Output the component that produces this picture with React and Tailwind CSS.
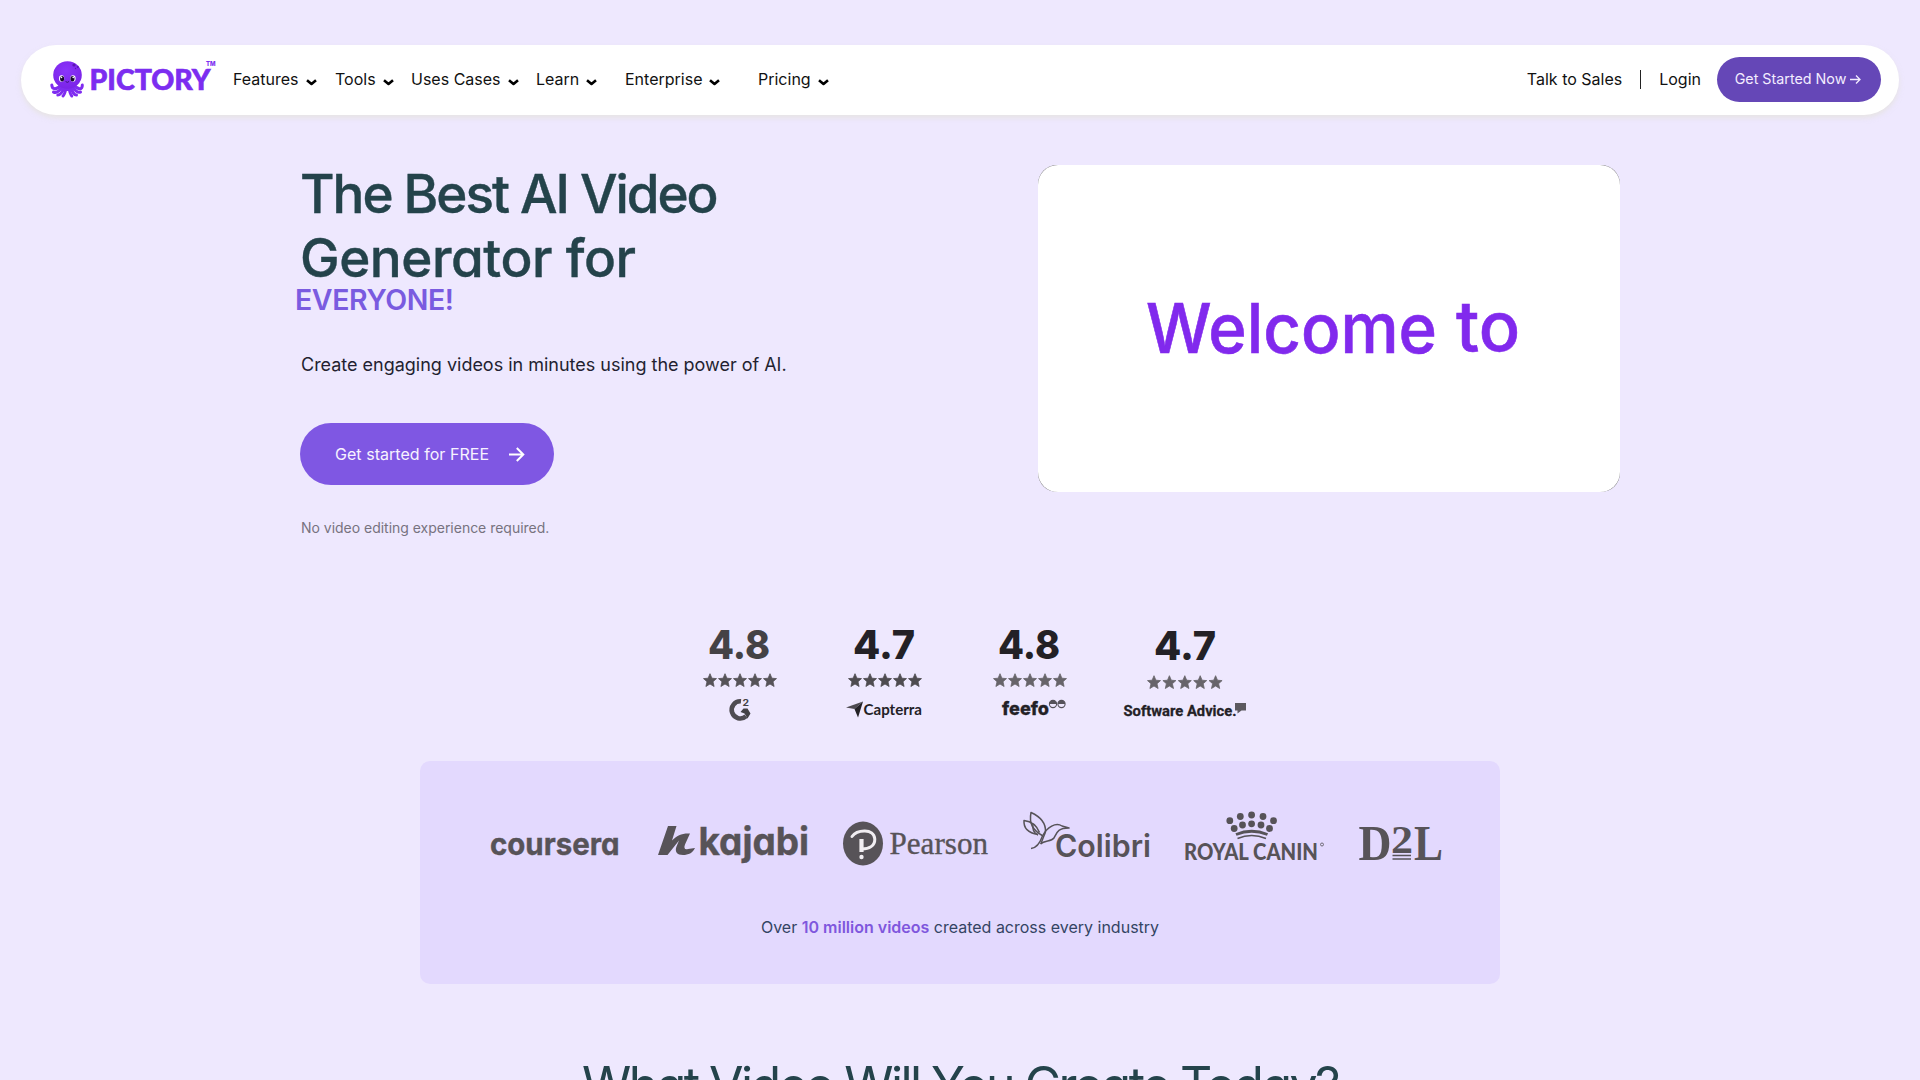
const INTER = "font-['Inter',sans-serif]";

const NAV = [
  { label: 'Features', width: 'w-[102px]' },
  { label: 'Tools', width: 'w-[76px]' },
  { label: 'Uses Cases', width: 'w-[125px]' },
  { label: 'Learn', width: 'w-[89px]' },
  { label: 'Enterprise', width: 'w-[133px]' },
  { label: 'Pricing', width: 'w-[80px]' },
];

/* Text inside a logo drawing, stretched to the logo's width. */
function Word({ x, y, size, width, weight = 700, family = 'Inter', children, ...rest }) {
  return (
    <text
      x={x}
      y={y}
      fontSize={size}
      fontWeight={weight}
      fontFamily={`${family}, sans-serif`}
      textLength={width}
      lengthAdjust="spacingAndGlyphs"
      {...rest}
    >
      {children}
    </text>
  );
}

function PictoryLogo() {
  return (
    <svg className="h-[46px] w-[170px] shrink-0" viewBox="48 56 170 46">
      <defs>
        <radialGradient id="head" cx="45%" cy="35%" r="70%">
          <stop offset="0" stopColor="#8a35fb" />
          <stop offset="1" stopColor="#7a22e6" />
        </radialGradient>
      </defs>
      <g fill="none" stroke="#7f2cf0" strokeWidth="3" strokeLinecap="round">
        <path d="M61 85 C57 90 52 90 51.800 85" />
        <path d="M74 85 C78 90 82.500 90 82.300 85" />
        <path d="M62 87 C59 92 56 93 53.500 92" />
        <path d="M73 87 C76 92 78 93 80.500 92" />
        <path d="M64 88 C62 93 60 95 57.800 95" />
        <path d="M71 88 C73 93 74 95 76.500 95" />
        <path d="M66 88 C65 93 64.500 95 63 96" />
        <path d="M69 88 C70 93 70.500 95 71.800 96" />
      </g>
      <path d="M61 82 H74 L73.500 91 H61.500 Z" fill="#7f2cf0" />
      <ellipse cx="67.500" cy="75" rx="14.300" ry="13.800" fill="url(#head)" />
      <g fill="#5a16b5">
        <circle cx="74" cy="65" r="1.600" />
        <circle cx="77.800" cy="67" r="1.100" />
        <circle cx="75.500" cy="68.500" r=".7" />
      </g>
      <g>
        <ellipse cx="61.600" cy="78.500" rx="2.600" ry="3.300" fill="#fff" />
        <ellipse cx="73" cy="78.500" rx="2.600" ry="3.300" fill="#fff" />
        <ellipse cx="62.100" cy="78.700" rx="2" ry="2.800" fill="#17082e" />
        <ellipse cx="72.500" cy="78.700" rx="2" ry="2.800" fill="#17082e" />
        <circle cx="61.500" cy="77.400" r=".8" fill="#fff" />
        <circle cx="73.200" cy="77.400" r=".8" fill="#fff" />
      </g>
      <path d="M65.600 81.500 Q67.300 83.200 69 81.500" stroke="#2b0a5c" strokeWidth=".8" fill="none" />
      <Word x="89.500" y="90.300" size="27.500" width="121" weight="900" family="Lato" fill="#7c2df0" stroke="#7c2df0" strokeWidth=".6">PICTORY</Word>
      <Word x="206" y="66" size="6.500" width="9.500" weight="800" fill="#7c2df0">TM</Word>
    </svg>
  );
}

function Chevron() {
  return (
    <svg className="relative top-[3px] h-[7px] w-[11px]" viewBox="0 0 11 7" fill="none" stroke="#000" strokeWidth="2.600">
      <path d="M1 1.200 L5.500 5 L10 1.200" strokeLinejoin="round" />
    </svg>
  );
}

function Header() {
  return (
    <header className="mx-[21px] flex h-[70px] items-center rounded-full bg-white pr-[18px] pb-[2px] pl-[27px] text-base text-[#111] shadow-[0_3px_5px_rgba(225,225,205,0.5)]">
      <PictoryLogo />
      <nav className="ml-[15px] flex">
        {NAV.map((item) => (
          <a key={item.label} className={`flex items-center gap-[7px] whitespace-nowrap ${item.width}`}>
            {item.label}
            <Chevron />
          </a>
        ))}
      </nav>
      <div className="ml-auto flex items-center">
        <a>Talk to Sales</a>
        <span className="ml-[18px] h-[19px] w-px bg-[#222]" />
        <a className="ml-[18px]">Login</a>
        <a className="ml-[16px] flex h-[45px] w-[164px] items-center justify-center gap-[4px] rounded-full bg-[#6547b7] pr-[2px] text-[14.300px] text-[#f3edff]">
          Get Started Now
          <svg className="h-[11px] w-[11px]" viewBox="0 0 11 11" fill="none" stroke="currentColor" strokeWidth="1.300">
            <path d="M0 5.500 H10 M6 1.500 L10 5.500 L6 9.500" />
          </svg>
        </a>
      </div>
    </header>
  );
}

function Hero() {
  return (
    <section className="mt-[50px] flex h-[390px] justify-between pr-[300px] pl-[301px]">
      <div className="flex flex-col items-start">
        <h1 className="-mt-[3px] -ml-px w-[500px] text-[53px] leading-[64px] font-medium text-[#24434b] [-webkit-text-stroke:0.4px_#24434b] [font-feature-settings:'cv11']">
          <span className="block tracking-[-2.050px]">The Best AI Video</span>
          <span className="block tracking-[-0.450px]">Generator for</span>
        </h1>
        <p className="mt-[3px] -ml-[6px] h-[34px] text-[28.500px] leading-[14px] font-semibold tracking-[-0.4px] text-[#7a5be0]">EVERYONE!</p>
        <p className="mt-[24px] text-[18px] leading-7 tracking-[-0.010px] text-[#231f30]">Create engaging videos in minutes using the power of AI.</p>
        <a className="mt-[44px] -ml-px flex h-[62px] w-[254px] items-center rounded-[31px] bg-[#7f57e3] pl-[35px] text-base text-[#f7f2ff]">
          <span className="tracking-[0.040px]">Get started for FREE</span>
          <svg className="ml-[20px] h-[15px] w-[16px]" viewBox="0 0 16 15" fill="none" stroke="#fff" strokeWidth="2">
            <path d="M0 7.500 H14 M7.800 1 L14.300 7.500 L7.800 14" />
          </svg>
        </a>
        <p className="mt-[33px] text-[14px] leading-5 tracking-[-0.020px] text-[#77737f]">No video editing experience required.</p>
      </div>
      <div className="h-[327px] w-[582px] rounded-[19px] bg-[#777]">
        <div className="h-full w-full rounded-[20px] bg-white">
          <svg className="h-full w-full" viewBox="1038 165 582 327" fill="#8129ed" stroke="#8129ed" strokeWidth=".6">
            <Word x="1146" y="353" size="69" width="291" weight="500">Welcome</Word>
            <Word x="1456" y="351" size="69" width="64" weight="500">to</Word>
          </svg>
        </div>
      </div>
    </section>
  );
}

function Stars({ x, y, pitch = 15, fill = '#565358' }) {
  return (
    <g fill={fill} stroke={fill} strokeWidth=".8" strokeLinejoin="round">
      {[0, 1, 2, 3, 4].map((i) => (
        <path
          key={i}
          transform={`translate(${x + i * pitch} ${y})`}
          d="M0 -6.800 L1.900 -2.300 L6.500 -1.900 L3 1.200 L4.100 6 L0 3.500 L-4.100 6 L-3 1.200 L-6.500 -1.900 L-1.900 -2.300 Z"
        />
      ))}
    </g>
  );
}

function Ratings() {
  return (
    <section className="mt-[60px] flex justify-center pl-[20px]">
      <svg className="h-[110px] w-[145px]" viewBox="680 615 145 110" fill="#444246">
        <Word x="708" y="659" size="40" width="62" weight="800">4.8</Word>
        <Stars x={710} y={680.5} />
        <path d="M741 701.300 A8.600 8.600 0 1 0 746 716.300" fill="none" stroke="#4f4c52" strokeWidth="4.600" />
        <path d="M740.500 712 L743.500 708.500 H747.500 L750.500 713.500 L747.500 718.500 L744.500 713.500 Z" />
        <Word x="742.500" y="706" size="9" width="6.500" weight="700">2</Word>
      </svg>
      <svg className="h-[110px] w-[145px]" viewBox="825 615 145 110" fill="#232126">
        <Word x="853" y="659" size="40" width="62" weight="800">4.7</Word>
        <Stars x={855} y={680.5} fill="#4e4b50" />
        <path d="M846 707.500 L863 701.500 L854.500 709 Z" fill="#4d4a50" />
        <path d="M863 701.500 L858 717.500 L854.500 709 Z" />
        <Word x="863.500" y="715" size="15" width="58.500" weight="700" family="Lato">Capterra</Word>
      </svg>
      <svg className="h-[110px] w-[145px]" viewBox="970 615 145 110" fill="#232126">
        <Word x="998" y="659" size="40" width="62" weight="800">4.8</Word>
        <Stars x={1000} y={680.5} fill="#67646a" />
        <Word x="1002" y="714.500" size="18.500" width="47" weight="800" stroke="#232126" strokeWidth=".3">feefo</Word>
        <g fill="none" stroke="#55525a" strokeWidth="1.100">
          <circle cx="1053" cy="704" r="3.600" />
          <circle cx="1061.500" cy="704" r="3.600" />
        </g>
        <path d="M1049.400 704 A3.600 3.600 0 0 1 1056.600 704 Z M1057.900 704 A3.600 3.600 0 0 1 1065.100 704 Z" fill="#55525a" />
      </svg>
      <svg className="h-[110px] w-[145px]" viewBox="1115 615 145 110" fill="#232126">
        <Word x="1154" y="660" size="40" width="62" weight="800">4.7</Word>
        <Stars x={1154} y={682.500} pitch={15.400} fill="#67646a" />
        <Word x="1123.500" y="716" size="15.500" width="113" weight="700" family="Roboto" stroke="#232126" strokeWidth=".3">Software Advice.</Word>
        <path d="M1235 703 H1246 V710.500 H1241.500 L1237.500 713.500 V710.500 H1235 Z" fill="#5b585f" />
      </svg>
    </section>
  );
}

const CROWN = [
  [1229.800, 820.700], [1240.300, 816.500], [1251.600, 815], [1263, 816.500], [1273.500, 820.700],
  [1234.200, 828.500], [1242.500, 825], [1251.600, 823.800], [1261, 825], [1269.500, 828.500],
];

function CustomerPanel() {
  return (
    <section className="mx-auto mt-[36px] h-[223px] w-[1080px] rounded-[10px] bg-[#e3d9fe]">
      <div className="flex h-[114px] items-end pl-[60px] text-[#575358]">
        <svg className="h-[66px] w-[165px]" viewBox="480 809 165 66" fill="currentColor">
          <Word x="490" y="854.500" size="30.500" width="129.500" weight="700" stroke="currentColor" strokeWidth=".4" style={{ fontFeatureSettings: "'cv11'" }}>coursera</Word>
        </svg>
        <svg className="h-[66px] w-[185px]" viewBox="645 809 185 66" fill="currentColor">
          <path d="M668 826 H676.500 L672 840.500 C677 835.500 682 833 690 833.500 L685 844.500 C683.500 848.500 685 850 688 849 L695 848 C692.500 853 688.500 855 683 855 C677 855 674.500 851.500 676.500 846.500 L679 840.500 L667.500 855 H658 Z" />
          <Word x="698.500" y="854.500" size="38" width="110.500" weight="700" stroke="currentColor" strokeWidth=".4" style={{ fontFeatureSettings: "'cv11'" }}>kajabi</Word>
        </svg>
        <svg className="h-[66px] w-[180px]" viewBox="830 809 180 66" fill="currentColor">
          <ellipse cx="863" cy="843.500" rx="20" ry="22" />
          <g fill="none" stroke="#f1eef2" strokeLinecap="round">
            <path d="M852 836.500 C857 829.500 874 828 874.800 839 C875 846 869 849 862 849" strokeWidth="3" />
            <path d="M861.500 839 V852" strokeWidth="4.200" strokeLinecap="butt" />
          </g>
          <circle cx="861.500" cy="857" r="2.200" fill="#f1eef2" />
          <Word x="889.500" y="853.500" size="30.500" width="98.500" weight="400" family="Liberation Serif" stroke="currentColor" strokeWidth=".35">Pearson</Word>
        </svg>
        <svg className="h-[66px] w-[160px]" viewBox="1010 809 160 66" fill="currentColor">
          <g fill="none" stroke="currentColor" strokeWidth="1.500" strokeLinejoin="round">
            <path d="M1043 836 C1032 830 1029 823 1031 812.500 C1041 817 1046 823 1045.500 832" />
            <path d="M1038 834.500 C1028 833 1023.500 828 1024 820.500 C1032 821.500 1037 826 1039.500 832.500" />
            <path d="M1033 823.500 C1032 829 1034 833 1038 835" />
            <path d="M1031 848.500 C1037 848 1040 843 1042.500 836 C1047 827 1056 822 1062 826 L1069 828 C1058 828 1057 832 1054 838 C1051 842 1045 840 1040.500 844" />
            <path d="M1045.500 832 C1044 836 1042 840 1041 844" />
          </g>
          <Word x="1055" y="857" size="31" width="96" weight="600" style={{ fontFeatureSettings: "'cv11'" }}>Colibri</Word>
        </svg>
        <svg className="h-[66px] w-[170px]" viewBox="1170 809 170 66" fill="currentColor">
          {CROWN.map(([x, y]) => (
            <circle key={`${x}-${y}`} cx={x} cy={y} r="3.400" />
          ))}
          <path d="M1236 834.500 Q1251.600 828 1267.500 834.500" fill="none" stroke="currentColor" strokeWidth="2.800" />
          <path d="M1237.500 838.500 Q1251.600 832.500 1266 838.500" fill="none" stroke="currentColor" strokeWidth="1.600" />
          <Word x="1184" y="859.500" size="22.500" width="134" weight="900" family="Lato">ROYAL CANIN</Word>
          <circle cx="1322" cy="844.500" r="1.500" fill="none" stroke="currentColor" strokeWidth=".8" />
        </svg>
        <svg className="h-[66px] w-[120px]" viewBox="1340 809 120 66" fill="currentColor">
          <Word x="1358.500" y="860" size="51" width="33" weight="700" family="Liberation Serif">D</Word>
          <Word x="1391" y="853" size="39" width="22" weight="700" family="Liberation Serif">2</Word>
          <path d="M1392.500 855.500 H1411 M1392.500 859 H1411" stroke="currentColor" strokeWidth="1.600" />
          <Word x="1414" y="860" size="51" width="29" weight="700" family="Liberation Serif">L</Word>
        </svg>
      </div>
      <p className="mt-[40px] text-center text-base leading-6 text-[#344463]">
        Over <span className="font-semibold text-[#7f57dd]">10 million videos</span> created across every industry
      </p>
    </section>
  );
}

export default function App() {
  return (
    <main className={`h-[1080px] w-[1920px] overflow-hidden bg-[#eee8fe] pt-[45px] ${INTER}`}>
      <Header />
      <Hero />
      <Ratings />
      <CustomerPanel />
      <h2 className="mt-[69px] text-center text-[50px] leading-[64px] font-normal tracking-[-2.550px] whitespace-nowrap text-[#24434b] [font-feature-settings:'cv11']">
        What Video Will You Create Today?
      </h2>
    </main>
  );
}
